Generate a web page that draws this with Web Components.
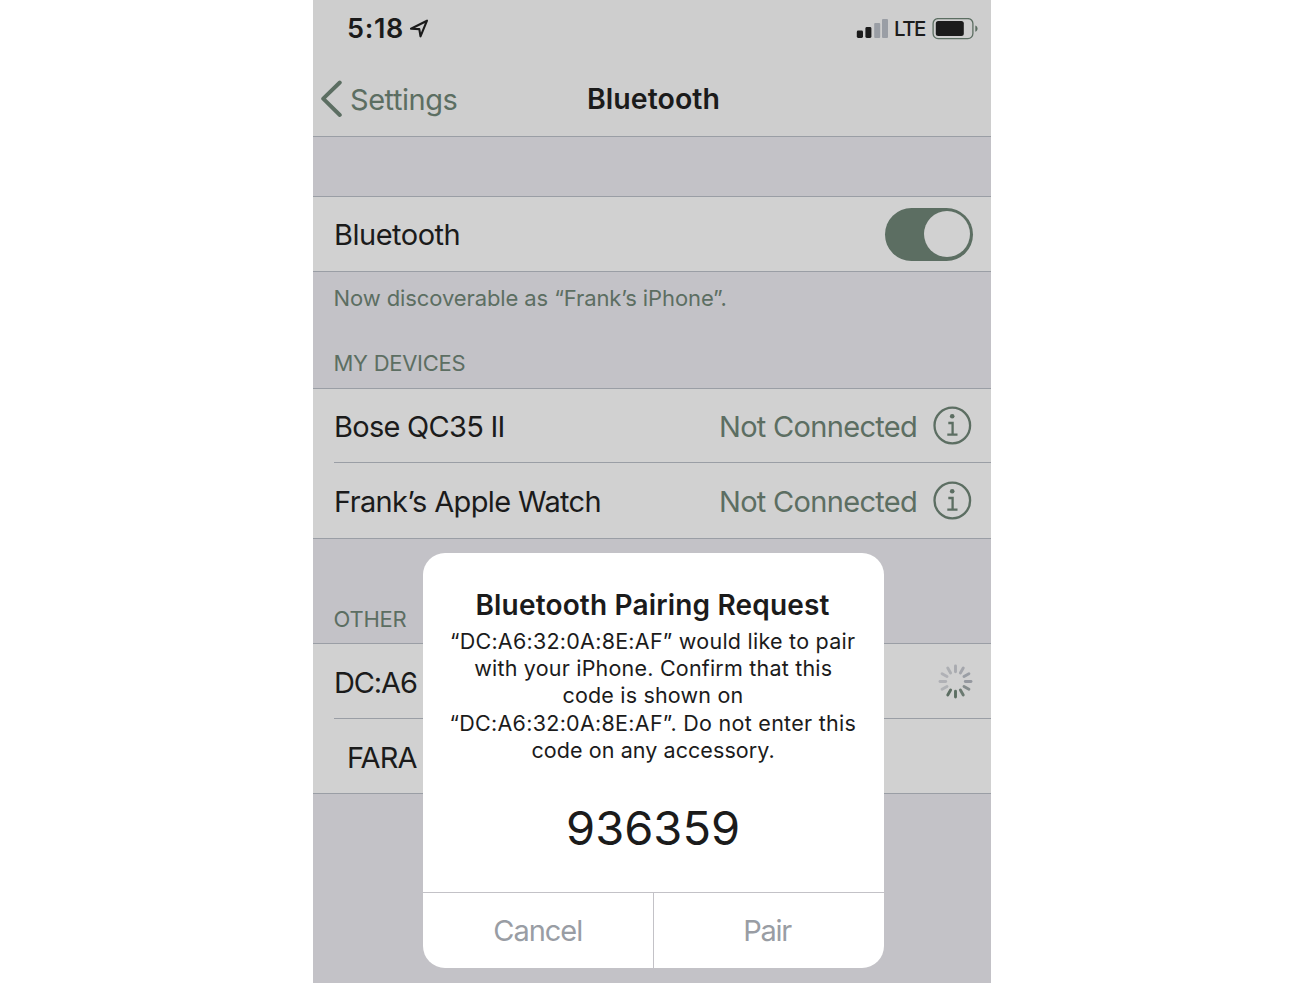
<!DOCTYPE html>
<html lang="en">
<head>
<meta charset="utf-8">
<title>Bluetooth</title>
<style>
body{margin:0;background:#fff;height:983px;overflow:hidden;font-family:Inter,"Liberation Sans",sans-serif;color:#1b1b1b}
</style>
</head>
<body>
<phone-screen>
  <status-bar slot="bar"></status-bar>
  <nav-bar slot="bar"></nav-bar>
  <list-group style="margin-top:59px">
    <list-row style="--indent:2px">
      <fit-text w="122.5" style="padding-top:1px">Bluetooth</fit-text>
      <toggle-switch slot="end"></toggle-switch>
    </list-row>
  </list-group>
  <section-label style="height:53px"><fit-text w="391">Now discoverable as “Frank’s iPhone”.</fit-text></section-label>
  <section-label style="height:63px;padding-top:14px"><fit-text w="130">MY DEVICES</fit-text></section-label>
  <list-group>
    <list-row style="--shift:3px;--row:73px;--indent:2px">
      <fit-text w="167.5">Bose QC35 II</fit-text>
      <fit-text slot="end" w="195">Not Connected</fit-text><info-icon slot="end"></info-icon>
    </list-row>
    <list-row divided style="--shift:3px;--row:76px;--indent:2px">
      <fit-text w="263.5">Frank’s Apple Watch</fit-text>
      <fit-text slot="end" w="195">Not Connected</fit-text><info-icon slot="end"></info-icon>
    </list-row>
  </list-group>
  <section-label style="height:48px;margin-top:56px"><fit-text w="72">OTHER</fit-text></section-label>
  <list-group>
    <list-row style="--shift:4px;--indent:2px">
      <fit-text w="81">DC:A6</fit-text>
      <busy-spinner slot="end"></busy-spinner>
    </list-row>
    <list-row divided style="--shift:4px;--indent:15px;--row:75px">
      <fit-text w="68.5">FARA</fit-text>
    </list-row>
  </list-group>
  <pair-dialog slot="overlay">
    <fit-text slot="title" w="352">Bluetooth Pairing Request</fit-text>
    <fit-text slot="line" w="404">“DC:A6:32:0A:8E:AF” would like to pair</fit-text>
    <fit-text slot="line" w="357.5">with your iPhone. Confirm that this</fit-text>
    <fit-text slot="line" w="179">code is shown on</fit-text>
    <fit-text slot="line" w="405">“DC:A6:32:0A:8E:AF”. Do not enter this</fit-text>
    <fit-text slot="line" w="241">code on any accessory.</fit-text>
    <fit-text slot="code" w="170">936359</fit-text>
    <fit-text slot="cancel" w="87">Cancel</fit-text>
    <fit-text slot="accept" w="47">Pair</fit-text>
  </pair-dialog>
</phone-screen>

<script>
const define = (name, html, ready) => customElements.define(name, class extends HTMLElement {
  constructor() {
    super();
    const t = document.createElement('template');
    t.innerHTML = html;
    this.attachShadow({mode: 'open'}).append(t.content.cloneNode(true));
  }
  connectedCallback() { if (ready) ready(this); }
});

define('phone-screen', `<style>
:host{display:flex;flex-direction:column;position:relative;width:678px;height:983px;margin-left:313px;background:#c3c2c7;overflow:hidden}
header{flex:none;background:#cecece;border-bottom:1px solid #9a9ea5;height:136px}
main{display:flex;flex-direction:column}
</style><header><slot name="bar"></slot></header><main><slot></slot></main><slot name="overlay"></slot>`);

define('status-bar', `<style>
:host{display:flex;align-items:center;height:57px;padding:0 13px 0 35px;box-sizing:border-box}
.time{font-size:27px;font-weight:600;padding-top:2px}
.carrier{font-size:20.5px;font-weight:500;margin:0 6px 0 7px;padding-top:2px}
.arrow{margin-left:7px}.signal{margin-left:auto}svg{display:block;flex:none}
</style>
<fit-text class="time" w="54">5:18</fit-text>
<svg class="arrow" width="20" height="20" viewBox="0 0 20 20"><path d="M2 9.7 18 1.7 11.5 17.3 10.3 10.1Z" fill="none" stroke="#1b1b1b" stroke-width="2.1" stroke-linejoin="round"/></svg>
<svg class="signal" width="32" height="20" viewBox="0 0 32 20"><g fill="#1b1b1b"><rect x=".8" y="11.5" width="6.2" height="7.5" rx="1.4"/><rect x="9.4" y="8" width="6" height="11" rx="1.4"/></g><g fill="#9a9ea5"><rect x="18.2" y="4" width="6" height="15" rx="1"/><rect x="26" y="0" width="6" height="19" rx="1"/></g></svg>
<fit-text class="carrier" w="31">LTE</fit-text>
<svg width="46" height="22" viewBox="0 0 46 22"><rect x="1.1" y=".6" width="39.8" height="20" rx="5" fill="none" stroke="#5c6e62" stroke-width="1.3"/><rect x="3.8" y="3.1" width="28" height="14.8" rx="2.5" fill="#1b1b1b"/><path d="M43.3 7.4v6.4c3-1 3-5.4 0-6.4Z" fill="#5c6e62"/></svg>`);

define('nav-bar', `<style>
:host{display:grid;grid-template-columns:144px auto 1fr;align-items:center;height:79px;padding:0 7px;box-sizing:border-box;font-size:29px;margin-top:2px}
.back{display:flex;align-items:center;gap:8px;color:#5c6e62}
.title{font-weight:600;font-size:28.5px;margin-left:125px;padding-top:2px}svg{display:block}.back fit-text{padding-top:2px}
</style>
<div class="back"><svg width="23" height="38" viewBox="0 0 23 38"><path d="M19.8 2.5 3.2 18.7 19.8 35" fill="none" stroke="#5c6e62" stroke-width="3.9" stroke-linecap="round" stroke-linejoin="round"/></svg><fit-text w="105.5">Settings</fit-text></div>
<fit-text class="title" w="129.5">Bluetooth</fit-text>`);

define('list-group', `<style>
:host{display:block;background:#d1d1d1;border:solid #9a9ea5;border-width:1px 0}
</style><slot></slot>`);

define('list-row', `<style>
:host{display:flex;height:var(--row,74px);box-sizing:border-box;align-items:center;position:relative;padding:var(--shift,0) 18px 0 21px;font-size:29px}
:host([divided]) i{position:absolute;left:21px;right:0;top:0;height:1px;background:#9a9ea5}
.label{display:flex;margin-left:var(--indent,0)}
.end{margin-left:auto;display:flex;align-items:center;color:#5c6e62;gap:17px}
</style><i></i><span class="label"><slot></slot></span><span class="end"><slot name="end"></slot></span>`);

define('section-label', `<style>
:host{display:flex;align-items:center;box-sizing:border-box;padding-left:21.5px;color:#5c6e62;font-size:22px}
</style><slot></slot>`);

define('toggle-switch', `<style>
:host{display:flex;justify-content:flex-end;width:88px;height:53px;border-radius:27px;background:#5c6e62;box-sizing:border-box;padding:3.5px}
span{width:46px;height:46px;border-radius:50%;background:#d1d1d1}
</style><span></span>`);

define('info-icon', `<style>:host{display:block;width:39px;height:39px;margin:-3px 1px 0 0}svg{display:block}</style>
<svg width="39" height="39" viewBox="0 0 39 39" fill="none" stroke="#5c6e62" stroke-width="2.3"><circle cx="19.3" cy="19.5" r="17.8"/><circle cx="19.2" cy="10.2" r="2.3" fill="#5c6e62" stroke="none"/><path d="M15.3 17h4.3v12M14.3 28.7h10.2"/></svg>`);

define('busy-spinner', `<style>:host{display:block;width:35px;height:35px;margin-top:-3px}svg{display:block}</style>
<svg width="35" height="35" viewBox="-17.5 -17.5 35 35"></svg>`, el => {
  const shades = ['#a9abb0','#a4a6ac','#9a9ea5','#9699a0','#858c8d','#6b7a71','#5c6e62','#5c6e62','#b0b2b6','#b0b1b6','#b0b1b6','#adafb3'];
  el.shadowRoot.querySelector('svg').innerHTML = shades.map((c, i) =>
    `<line y1="-9.8" y2="-15.5" stroke="${c}" stroke-width="2.9" stroke-linecap="round" transform="rotate(${i * 30})"/>`).join('');
});

define('pair-dialog', `<style>
:host{position:absolute;left:109.5px;top:553px;width:461px;height:415px;border-radius:22px;background:#fff;overflow:hidden;display:flex;flex-direction:column}
.title{height:36px;margin-top:34px;display:grid;place-items:center;font-size:28px;font-weight:600;padding:1px 0 0 1px;box-sizing:border-box}
.text{display:grid;grid-auto-rows:27.4px;place-items:center;font-size:21.5px;margin-top:4px}
.code{flex:1;display:grid;place-items:center;font-size:47px}
.actions{display:grid;grid-template-columns:1fr 1fr;height:76px;box-sizing:border-box;border-top:1px solid #c3c2c7;color:#999da4;font-size:29px}
.actions div{display:grid;place-items:center;padding-top:1px}
.actions div+div{border-left:1px solid #c3c2c7}
</style>
<div class="title"><slot name="title"></slot></div>
<div class="text"><slot name="line"></slot></div>
<div class="code"><slot name="code"></slot></div>
<div class="actions"><div><slot name="cancel"></slot></div><div><slot name="accept"></slot></div></div>`);

/* Tracks a line of text so that its visible ink spans exactly `w` pixels. */
const pen = document.createElement('canvas').getContext('2d');
define('fit-text', `<style>:host{display:block;white-space:nowrap;line-height:1.21;flex:none}span{display:block}</style><span><slot></slot></span>`, el => {
  const cs = getComputedStyle(el), text = el.textContent, w = +el.getAttribute('w');
  pen.font = `${cs.fontWeight} ${cs.fontSize} ${cs.fontFamily}`;
  const m = pen.measureText(text);
  const ink = m.actualBoundingBoxLeft + m.actualBoundingBoxRight;
  const inner = el.shadowRoot.querySelector('span');
  el.style.width = w + 'px';
  inner.style.letterSpacing = (w - ink) / (text.length - 1) + 'px';
  inner.style.marginLeft = m.actualBoundingBoxLeft + 'px';
});
</script>
</body>
</html>
